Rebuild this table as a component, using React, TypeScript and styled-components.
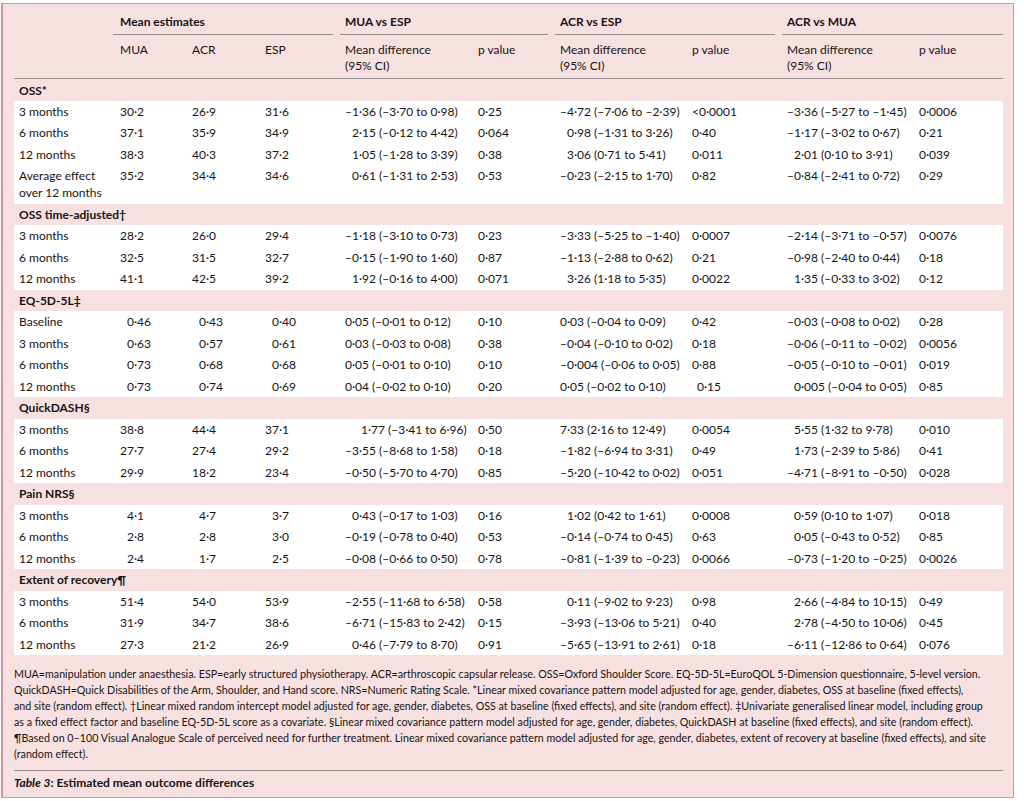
import React from 'react';
import styled, { createGlobalStyle } from 'styled-components';

const GlobalStyle = createGlobalStyle`
  body {
    margin: 0;
    background: #ffffff;
  }
`;

// label | MUA ACR ESP | MD p | MD p | MD p
const COLS = '99px 72px 73px 82px 133px 82px 132px 95px 132px 89px';
const RULE = '#978b8b';

type Cell = string | [string, number];
type DataRow = Cell[];
type Section = { title: string; rows: DataRow[] };

const sections: Section[] = [
  {
    title: 'OSS*',
    rows: [
      ['3 months', '30·2', '26·9', '31·6', '–1·36 (–3·70 to 0·98)', '0·25', '–4·72 (–7·06 to –2·39)', '<0·0001', '–3·36 (–5·27 to –1·45)', '0·0006'],
      ['6 months', '37·1', '35·9', '34·9', ['2·15 (–0·12 to 4·42)', 7], '0·064', ['0·98 (–1·31 to 3·26)', 7], '0·40', '–1·17 (–3·02 to 0·67)', '0·21'],
      ['12 months', '38·3', '40·3', '37·2', ['1·05 (–1·28 to 3·39)', 7], '0·38', ['3·06 (0·71 to 5·41)', 7], '0·011', ['2·01 (0·10 to 3·91)', 7], '0·039'],
      ['Average effect\nover 12 months', '35·2', '34·4', '34·6', ['0·61 (–1·31 to 2·53)', 7], '0·53', '–0·23 (–2·15 to 1·70)', '0·82', '–0·84 (–2·41 to 0·72)', '0·29'],
    ],
  },
  {
    title: 'OSS time-adjusted†',
    rows: [
      ['3 months', '28·2', '26·0', '29·4', '–1·18 (–3·10 to 0·73)', '0·23', '–3·33 (–5·25 to –1·40)', '0·0007', '–2·14 (–3·71 to –0·57)', '0·0076'],
      ['6 months', '32·5', '31·5', '32·7', '–0·15 (–1·90 to 1·60)', '0·87', '–1·13 (–2·88 to 0·62)', '0·21', '–0·98 (–2·40 to 0·44)', '0·18'],
      ['12 months', '41·1', '42·5', '39·2', ['1·92 (–0·16 to 4·00)', 7], '0·071', ['3·26 (1·18 to 5·35)', 7], '0·0022', ['1·35 (–0·33 to 3·02)', 7], '0·12'],
    ],
  },
  {
    title: 'EQ-5D-5L‡',
    rows: [
      ['Baseline', '0·46', '0·43', '0·40', '0·05 (–0·01 to 0·12)', '0·10', '0·03 (–0·04 to 0·09)', '0·42', '–0·03 (–0·08 to 0·02)', '0·28'],
      ['3 months', '0·63', '0·57', '0·61', '0·03 (–0·03 to 0·08)', '0·38', '–0·04 (–0·10 to 0·02)', '0·18', '–0·06 (–0·11 to –0·02)', '0·0056'],
      ['6 months', '0·73', '0·68', '0·68', '0·05 (–0·01 to 0·10)', '0·10', '–0·004 (–0·06 to 0·05)', '0·88', '–0·05 (–0·10 to –0·01)', '0·019'],
      ['12 months', '0·73', '0·74', '0·69', '0·04 (–0·02 to 0·10)', '0·20', '0·05 (–0·02 to 0·10)', ['0·15', 5], ['0·005 (–0·04 to 0·05)', 7], '0·85'],
    ],
  },
  {
    title: 'QuickDASH§',
    rows: [
      ['3 months', '38·8', '44·4', '37·1', ['1·77 (–3·41 to 6·96)', 16], '0·50', '7·33 (2·16 to 12·49)', '0·0054', ['5·55 (1·32 to 9·78)', 7], '0·010'],
      ['6 months', '27·7', '27·4', '29·2', '–3·55 (–8·68 to 1·58)', '0·18', '–1·82 (–6·94 to 3·31)', '0·49', ['1·73 (–2·39 to 5·86)', 7], '0·41'],
      ['12 months', '29·9', '18·2', '23·4', '–0·50 (–5·70 to 4·70)', '0·85', '–5·20 (–10·42 to 0·02)', '0·051', '–4·71 (–8·91 to –0·50)', '0·028'],
    ],
  },
  {
    title: 'Pain NRS§',
    rows: [
      ['3 months', '4·1', '4·7', '3·7', ['0·43 (–0·17 to 1·03)', 7], '0·16', ['1·02 (0·42 to 1·61)', 7], '0·0008', ['0·59 (0·10 to 1·07)', 7], '0·018'],
      ['6 months', '2·8', '2·8', '3·0', '–0·19 (–0·78 to 0·40)', '0·53', '–0·14 (–0·74 to 0·45)', '0·63', ['0·05 (–0·43 to 0·52)', 7], '0·85'],
      ['12 months', '2·4', '1·7', '2·5', '–0·08 (–0·66 to 0·50)', '0·78', '–0·81 (–1·39 to –0·23)', '0·0066', '–0·73 (–1·20 to –0·25)', '0·0026'],
    ],
  },
  {
    title: 'Extent of recovery¶',
    rows: [
      ['3 months', '51·4', '54·0', '53·9', '–2·55 (–11·68 to 6·58)', '0·58', ['0·11 (–9·02 to 9·23)', 7], '0·98', ['2·66 (–4·84 to 10·15)', 7], '0·49'],
      ['6 months', '31·9', '34·7', '38·6', '–6·71 (–15·83 to 2·42)', '0·15', '–3·93 (–13·06 to 5·21)', '0·40', ['2·78 (–4·50 to 10·06)', 7], '0·45'],
      ['12 months', '27·3', '21·2', '26·9', ['0·46 (–7·79 to 8·70)', 7], '0·91', '–5·65 (–13·91 to 2·61)', '0·18', '–6·11 (–12·86 to 0·64)', '0·076'],
    ],
  },
];

// left padding of each column's text
const pads = [5, 7, 7, 7, 5, 5, 5, 5, 5, 5];

const Card = styled.div`
  box-sizing: border-box;
  width: 1013px;
  height: 795px;
  margin: 3px 0 0 1px;
  padding: 0 10px 0 11px;
  border: 1px solid #dc8ea2;
  border-left-width: 2px;
  background: #f6e1e0;
  color: #161314;
  font-family: Lato, 'Open Sans', sans-serif;
  font-size: 12px;
  overflow: hidden;
`;

const Head = styled.div`
  display: grid;
  grid-template-columns: ${COLS};
  border-bottom: 1px solid ${RULE};
`;

const GroupTitle = styled.div<{ $col: number; $span: number; $pad: number; $last?: boolean }>`
  grid-column: ${(p) => p.$col} / span ${(p) => p.$span};
  grid-row: 1;
  margin-right: ${(p) => (p.$last ? 0 : 7)}px;
  padding: 10px 0 4px ${(p) => p.$pad}px;
  line-height: 16px;
  font-weight: 700;
  border-bottom: 1px solid ${RULE};
`;

const SubTitle = styled.div<{ $pad: number }>`
  grid-row: 2;
  padding: 7px 0 4px ${(p) => p.$pad}px;
  line-height: 16px;
`;

const SectionTitle = styled.div<{ $first?: boolean }>`
  display: flex;
  align-items: center;
  box-sizing: border-box;
  height: ${(p) => (p.$first ? 21.5 : 21.5)}px;
  padding: ${(p) => (p.$first ? '2px 0 0 5px' : '0 0 0 5px')};
  font-weight: 700;
`;

const Band = styled.div`
  background: #ffffff;
`;

const Row = styled.div`
  display: grid;
  grid-template-columns: ${COLS};
  padding: 2.25px 0;
  line-height: 17px;
`;

const Value = styled.div<{ $pad: number }>`
  padding-left: ${(p) => p.$pad}px;
  white-space: pre-line;
`;

const Notes = styled.p`
  margin: 0;
  padding: 11px 0 8px;
  font-size: 10.7px;
  line-height: 16px;
  white-space: nowrap;
  border-bottom: 1px solid ${RULE};
`;

const Caption = styled.div`
  padding-top: 4px;
  line-height: 16px;
  font-weight: 700;

  em {
    font-style: italic;
  }
`;

const indentFor = (col: number, text: string) => {
  if (col >= 1 && col <= 3 && text.split('·')[0].length === 1) return 7;
  return 0;
};

const renderCell = (cell: Cell, col: number) => {
  const [text, extra] = typeof cell === 'string' ? [cell, indentFor(col, cell)] : cell;
  return (
    <Value key={col} $pad={pads[col] + extra}>
      {text}
    </Value>
  );
};

const App = () => (
  <>
    <GlobalStyle />
    <Card>
      <Head>
        <GroupTitle $col={2} $span={3} $pad={7}>Mean estimates</GroupTitle>
        <GroupTitle $col={5} $span={2} $pad={5}>MUA vs ESP</GroupTitle>
        <GroupTitle $col={7} $span={2} $pad={5}>ACR vs ESP</GroupTitle>
        <GroupTitle $col={9} $span={2} $pad={5} $last>ACR vs MUA</GroupTitle>
        <SubTitle $pad={5} />
        <SubTitle $pad={7}>MUA</SubTitle>
        <SubTitle $pad={7}>ACR</SubTitle>
        <SubTitle $pad={7}>ESP</SubTitle>
        <SubTitle $pad={5}>Mean difference<br />(95% CI)</SubTitle>
        <SubTitle $pad={5}>p value</SubTitle>
        <SubTitle $pad={5}>Mean difference<br />(95% CI)</SubTitle>
        <SubTitle $pad={5}>p value</SubTitle>
        <SubTitle $pad={5}>Mean difference<br />(95% CI)</SubTitle>
        <SubTitle $pad={5}>p value</SubTitle>
      </Head>

      {sections.map((s, i) => (
        <React.Fragment key={s.title}>
          <SectionTitle $first={i === 0}>{s.title}</SectionTitle>
          <Band>
            {s.rows.map((r, j) => (
              <Row key={j}>{r.map((c, k) => renderCell(c, k))}</Row>
            ))}
          </Band>
        </React.Fragment>
      ))}

      <Notes>
        MUA=manipulation under anaesthesia. ESP=early structured physiotherapy. ACR=arthroscopic capsular release. OSS=Oxford Shoulder Score. EQ-5D-5L=EuroQOL 5-Dimension questionnaire, 5-level version.
        <br />
        QuickDASH=Quick Disabilities of the Arm, Shoulder, and Hand score. NRS=Numeric Rating Scale. *Linear mixed covariance pattern model adjusted for age, gender, diabetes, OSS at baseline (fixed effects),
        <br />
        and site (random effect). †Linear mixed random intercept model adjusted for age, gender, diabetes, OSS at baseline (fixed effects), and site (random effect). ‡Univariate generalised linear model, including group
        <br />
        as a fixed effect factor and baseline EQ-5D-5L score as a covariate. §Linear mixed covariance pattern model adjusted for age, gender, diabetes, QuickDASH at baseline (fixed effects), and site (random effect).
        <br />
        ¶Based on 0–100 Visual Analogue Scale of perceived need for further treatment. Linear mixed covariance pattern model adjusted for age, gender, diabetes, extent of recovery at baseline (fixed effects), and site
        <br />
        (random effect).
      </Notes>
      <Caption>
        <em>Table 3</em>: Estimated mean outcome differences
      </Caption>
    </Card>
  </>
);

export default App;
